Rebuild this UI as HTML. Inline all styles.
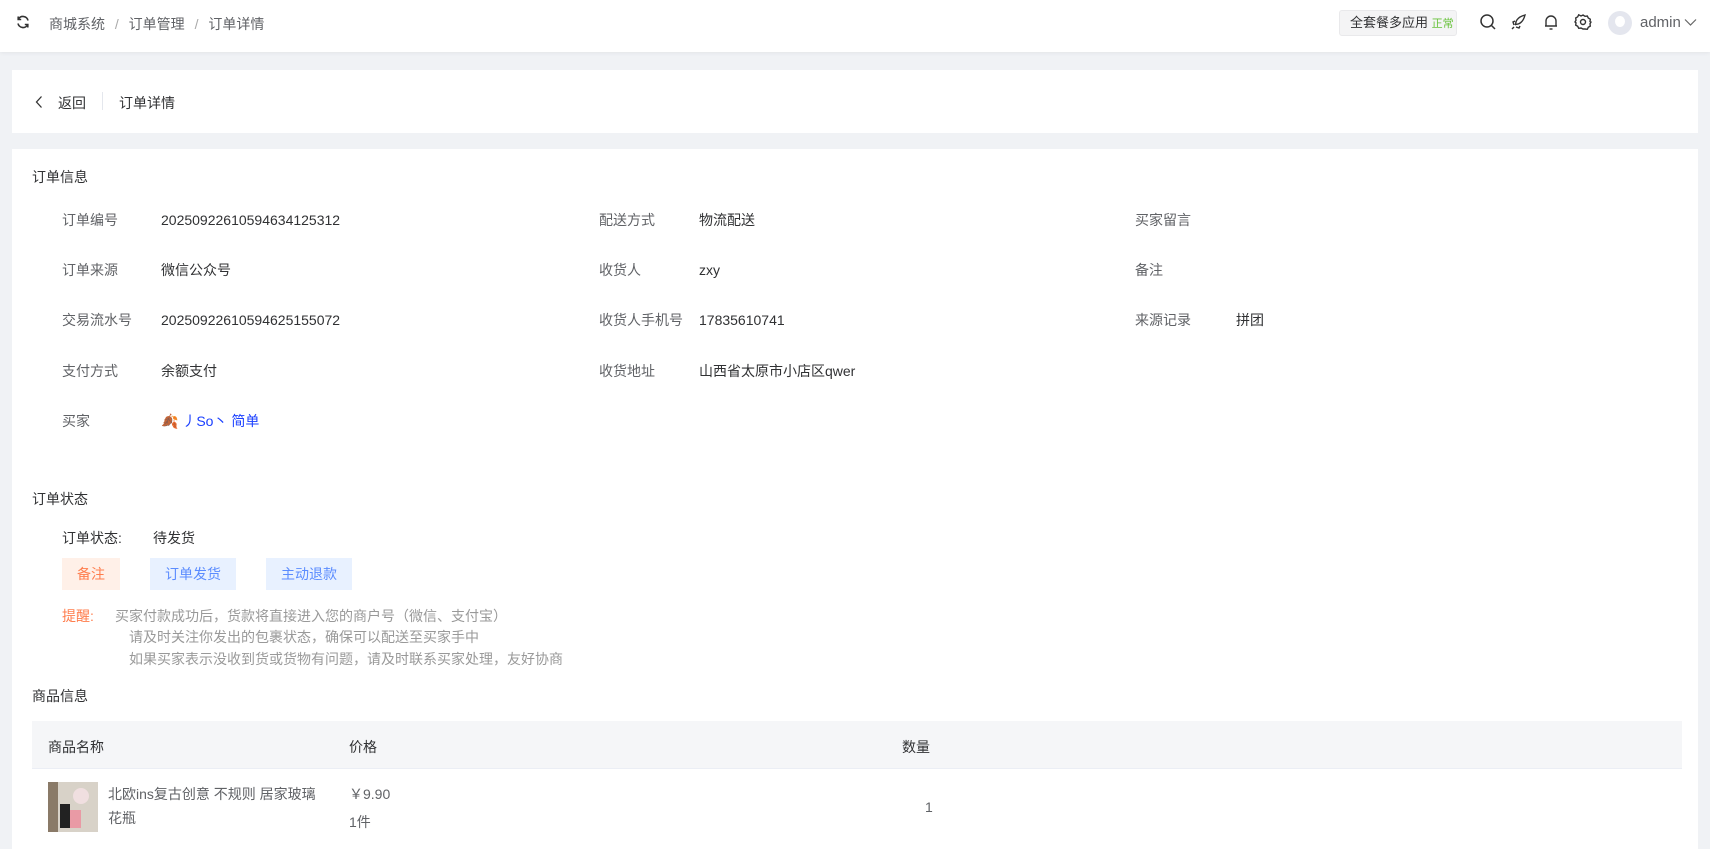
<!DOCTYPE html>
<html><head><meta charset="utf-8"><style>
*{margin:0;padding:0;box-sizing:border-box}
body{width:1710px;height:837px;overflow:hidden;background:#f0f2f5;font-family:"Liberation Sans","Noto Sans CJK SC",sans-serif;font-size:14px;color:#303133;position:relative}
.a{position:absolute;white-space:nowrap}
.hdr{position:absolute;left:0;top:0;width:1710px;height:52px;background:#fff;box-shadow:0 1px 4px rgba(0,0,0,.06)}
.card{position:absolute;background:#fff;left:12px;width:1686px}
.lbl{color:#606266}
.btn{position:absolute;height:32px;line-height:32px;text-align:center;font-size:14px}
.tip{color:#999}
</style></head><body>
<div class="hdr">
<svg class="a" style="left:15px;top:14px" width="16" height="16" viewBox="0 0 16 16" fill="none" stroke="#333" stroke-width="1.6"><path d="M13 6.5A5.2 5.2 0 0 0 3.5 5"/><path d="M3 9.5A5.2 5.2 0 0 0 12.5 11"/><path d="M3.2 2.5v3h3" /><path d="M12.8 13.5v-3h-3"/></svg>
<div class="a" style="left:49px;top:14px;color:#606266">商城系统 <span style="color:#aaa;margin:0 6px">/</span> 订单管理 <span style="color:#aaa;margin:0 6px">/</span> 订单详情</div>
<div class="a" style="left:1339px;top:10px;width:118px;height:26px;background:#f4f4f5;border:1px solid #e9e9eb;border-radius:3px;font-size:13px;line-height:24px;padding-left:10px">全套餐多应用 <span style="color:#67c23a;font-size:11px">正常</span></div>
<svg class="a" style="left:1479px;top:13px" width="18" height="18" viewBox="0 0 18 18" fill="none" stroke="#333" stroke-width="1.5"><circle cx="8" cy="8" r="6"/><path d="M12.5 12.5L16 16"/></svg>
<svg class="a" style="left:1510px;top:13px" width="18" height="18" viewBox="0 0 18 18" fill="none" stroke="#333" stroke-width="1.4"><path d="M6 12c-1-3 1-8 9-10-2 8-7 10-10 9z"/><path d="M5 8l-2 1 1 3M10 13l-1 2-3-1"/><path d="M4 14l-2 2"/></svg>
<svg class="a" style="left:1543px;top:13px" width="16" height="18" viewBox="0 0 16 18" fill="none" stroke="#333" stroke-width="1.4"><path d="M3 13V8a5 5 0 0 1 10 0v5H2h12"/><path d="M6.5 16h3"/></svg>
<svg class="a" style="left:1574px;top:13px" width="18" height="18" viewBox="0 0 18 18" fill="none" stroke="#333" stroke-width="1.4"><circle cx="9" cy="9" r="2.5"/><path d="M9 2l2 1.3 2.3-.3 1 2 2 1.2-.3 2.3L17 9l-1 1.8.3 2.3-2 1.2-1 2-2.3-.3L9 16l-2-1-2.3.3-1-2-2-1.2.3-2.3L1 9l1-1.8L1.7 5l2-1.2 1-2L7 3z"/></svg>
<div class="a" style="left:1608px;top:11px;width:24px;height:24px;border-radius:50%;background:#e4e6ee;overflow:hidden"><div style="width:10px;height:11px;border-radius:50%;background:#fff;margin:5px auto 0"></div></div>
<div class="a" style="left:1640px;top:14px;color:#606266;font-size:15px">admin</div>
<svg class="a" style="left:1684px;top:18px" width="13" height="9" viewBox="0 0 13 9" fill="none" stroke="#666" stroke-width="1.2"><path d="M1 1.5l5.5 5.5 5.5-5.5"/></svg>
</div>

<div class="card" style="top:70px;height:63px">
<svg class="a" style="left:22px;top:25px" width="10" height="14" viewBox="0 0 10 14" fill="none" stroke="#333" stroke-width="1.3"><path d="M7.5 1.5L2.5 7l5 5.5"/></svg>
<div class="a" style="left:46px;top:23px">返回</div>
<div class="a" style="left:90px;top:22px;width:1px;height:18px;background:#e4e7ed"></div>
<div class="a" style="left:107px;top:23px">订单详情</div>
</div>

<div class="card" style="top:149px;height:700px"></div>
<div class="a" style="left:32px;top:167px">订单信息</div>
<div class="a lbl" style="left:62px;top:210px">订单编号</div><div class="a" style="left:161px;top:212px">2025092261059463412531​2</div>
<div class="a lbl" style="left:62px;top:260px">订单来源</div><div class="a" style="left:161px;top:260px">微信公众号</div>
<div class="a lbl" style="left:62px;top:310px">交易流水号</div><div class="a" style="left:161px;top:312px">2025092261059462515507​2</div>
<div class="a lbl" style="left:62px;top:361px">支付方式</div><div class="a" style="left:161px;top:361px">余额支付</div>
<div class="a lbl" style="left:62px;top:411px">买家</div><div class="a" style="left:161px;top:411px;color:#1a3fff"><span style="color:#e05a10">🍂</span> 丿So丶 简单</div>
<div class="a lbl" style="left:599px;top:210px">配送方式</div><div class="a" style="left:699px;top:210px">物流配送</div>
<div class="a lbl" style="left:599px;top:260px">收货人</div><div class="a" style="left:699px;top:262px">zxy</div>
<div class="a lbl" style="left:599px;top:310px">收货人手机号</div><div class="a" style="left:699px;top:312px">17835610741</div>
<div class="a lbl" style="left:599px;top:361px">收货地址</div><div class="a" style="left:699px;top:361px">山西省太原市小店区qwer</div>
<div class="a lbl" style="left:1135px;top:210px">买家留言</div>
<div class="a lbl" style="left:1135px;top:260px">备注</div>
<div class="a lbl" style="left:1135px;top:310px">来源记录</div><div class="a" style="left:1236px;top:310px">拼团</div>

<div class="a" style="left:32px;top:489px">订单状态</div>
<div class="a" style="left:62px;top:528px">订单状态:</div><div class="a" style="left:153px;top:528px">待发货</div>
<div class="btn" style="left:62px;top:558px;width:58px;background:#fff0e8;color:#ff7d4d">备注</div>
<div class="btn" style="left:150px;top:558px;width:86px;background:#e8f1ff;color:#5b8cff">订单发货</div>
<div class="btn" style="left:266px;top:558px;width:86px;background:#e8f1ff;color:#5b8cff">主动退款</div>
<div class="a" style="left:62px;top:606px;color:#ff7d4d">提醒:</div>
<div class="a tip" style="left:115px;top:606px">买家付款成功后，货款将直接进入您的商户号（微信、支付宝）</div>
<div class="a tip" style="left:129px;top:627px">请及时关注你发出的包裹状态，确保可以配送至买家手中</div>
<div class="a tip" style="left:129px;top:649px">如果买家表示没收到货或货物有问题，请及时联系买家处理，友好协商</div>

<div class="a" style="left:32px;top:686px">商品信息</div>
<div class="a" style="left:32px;top:721px;width:1650px;height:48px;background:#f5f6f8;border-bottom:1px solid #ebeef5"></div>
<div class="a" style="left:48px;top:737px">商品名称</div>
<div class="a" style="left:349px;top:737px">价格</div>
<div class="a" style="left:902px;top:737px">数量</div>
<div class="a" style="left:48px;top:782px;width:50px;height:50px;background:linear-gradient(90deg,#8a7a68 0 20%,#d8d2c8 20% 100%)"><div style="position:absolute;left:12px;top:22px;width:10px;height:24px;background:#222"></div><div style="position:absolute;left:22px;top:28px;width:11px;height:18px;background:#e99aa5"></div><div style="position:absolute;left:25px;top:6px;width:16px;height:16px;border-radius:50%;background:#f0dfe0"></div></div>
<div class="a" style="left:108px;top:784px;color:#606266">北欧ins复古创意 不规则 居家玻璃</div>
<div class="a" style="left:108px;top:808px;color:#606266">花瓶</div>
<div class="a" style="left:349px;top:784px;color:#606266">￥9.90</div>
<div class="a" style="left:349px;top:812px;color:#606266">1件</div>
<div class="a" style="left:925px;top:799px;color:#606266">1</div>
</body></html>
